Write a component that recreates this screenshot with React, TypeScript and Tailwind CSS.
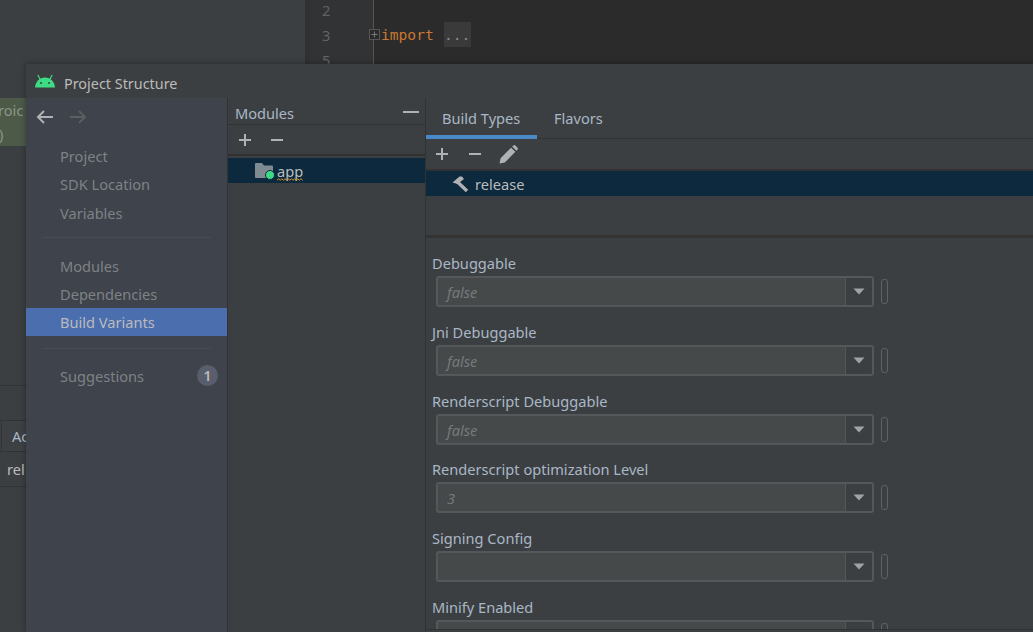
import React from "react";

const font = { fontFamily: '"Noto Sans", "Open Sans", sans-serif' };

function Plus({ className = "" }: { className?: string }) {
  return (
    <svg width="14" height="14" viewBox="0 0 14 14" className={className}>
      <path d="M7 1v12M1 7h12" stroke="#afb1b3" strokeWidth="2" />
    </svg>
  );
}
function Minus({ className = "" }: { className?: string }) {
  return (
    <svg width="14" height="14" viewBox="0 0 14 14" className={className}>
      <path d="M1 7h12" stroke="#afb1b3" strokeWidth="2" />
    </svg>
  );
}

function Field({ label, value }: { label: string; value?: string }) {
  return (
    <div className="flex flex-col shrink-0">
      <div className="h-[22px] pl-[6px] text-[14.6px] leading-[22px] text-[#a9b7c6] whitespace-nowrap">{label}</div>
      <div className="flex items-center mt-[2px] ml-[10px] mb-[13.75px]">
        <div className="flex w-[438px] h-[31px] rounded-[3px] border-2 border-[#55585a] bg-[#45494a]">
          <div className="flex-1 pl-[9px] pt-[1px] text-[14.6px] leading-[27px] italic text-[#77797b]">{value}</div>
          <div className="w-[27px] flex items-center justify-center bg-[#3c3f41] border-l border-[#55585a] rounded-r-[2px]">
            <svg width="12" height="7" viewBox="0 0 12 7">
              <path d="M0.5 0.5h11L6 6.5z" fill="#a0a2a4" />
            </svg>
          </div>
        </div>
        <div className="ml-[7px] w-[7px] h-[25px] rounded-[3px] border border-[#5f6264]" />
      </div>
    </div>
  );
}

function NavItem({ children, active }: { children: React.ReactNode; active?: boolean }) {
  return (
    <div
      className={
        "h-[28px] pl-[34px] pt-[1px] text-[14.6px] leading-[27px] " +
        (active ? "bg-[#4b6eaf] text-[#bbbbbb]" : "text-[#7f8285]")
      }
    >
      {children}
    </div>
  );
}

export default function App() {
  return (
    <div className="relative w-[1033px] h-[632px] overflow-hidden bg-[#3c3f41] flex" style={font}>
      {/* Background IDE */}
      <div className="w-[305px] h-full flex flex-col">
        <div className="mt-[98px] w-[26px] h-[48px] bg-[#4d5a48] text-[14.6px] text-[#8b958a] leading-[24px] whitespace-nowrap overflow-hidden">
          <div className="-ml-[2px]">roic</div>
          <div className="-ml-[1px]">)</div>
        </div>
        <div className="mt-[239px] h-[1px] w-full bg-[#323232]" />
        <div className="mt-[34px] h-[32px] w-full border-t border-b border-[#323232] bg-[#3e4144] flex">
          <div className="ml-[1px] pl-[10px] w-[26px] text-[14.6px] leading-[31px] text-[#a9b7c6] border-l border-[#323232] overflow-hidden">Ac</div>
        </div>
        <div className="h-[35px] w-full border-b border-[#323232] pl-[7px] text-[14.6px] leading-[35px] text-[#bbbbbb] overflow-hidden">rel</div>
      </div>
      <div className="w-[69px] h-full bg-[#313335] border-r border-[#555555] border-l-[5px] border-l-[#2f3133] text-[14.6px] text-[#606366] pl-[12px]">
        <div className="h-[25px] leading-[20px]">2</div>
        <div className="h-[25px] leading-[20px]">3</div>
        <div className="h-[25px] leading-[20px]">5</div>
      </div>
      <div className="flex-1 h-full bg-[#2b2b2b] relative">
        <div className="flex items-center h-[25px] mt-[22px] text-[14.6px]" style={{ fontFamily: '"DejaVu Sans Mono", monospace' }}>
          <span className="ml-[7px] text-[#cc7832]">import</span>
          <span className="ml-[10px] w-[27px] h-[25px] leading-[25px] bg-[#3a3a3a] text-[#8a8a8a] text-center">...</span>
        </div>
        <div className="absolute left-[-5px] top-[29px] w-[11px] h-[11px] border border-[#555555] bg-[#2b2b2b] flex items-center justify-center">
          <svg width="7" height="7" viewBox="0 0 7 7"><path d="M3.5 0.5v6M0.5 3.5h6" stroke="#777" strokeWidth="1" /></svg>
        </div>
      </div>

      {/* Dialog window */}
      <div className="absolute left-[26px] top-[64px] w-[1007px] h-[568px] bg-[#3c3f41] flex flex-col shadow-[0_0_6px_rgba(0,0,0,0.35)]">
        <div className="h-[34px] flex items-center shrink-0">
          <svg width="20" height="15" viewBox="0 0 20 15" className="ml-[9px] -mt-[2px]">
            <path d="M0 14.5C0.5 8.5 4.5 4.5 10 4.5s9.5 4 10 10z" fill="#3ddc84" />
            <path d="M5 6L2.8 2M15 6l2.2-4" stroke="#3ddc84" strokeWidth="1.2" />
            <circle cx="6" cy="10" r="1" fill="#3c3f41" />
            <circle cx="14" cy="10" r="1" fill="#3c3f41" />
          </svg>
          <span className="ml-[9px] mt-[5px] text-[14.4px] leading-[22px] text-[#bbbbbb]">Project Structure</span>
        </div>
        <div className="flex-1 flex min-h-0">
          {/* Nav */}
          <div className="w-[202px] shrink-0 bg-[#3e434c] border-r border-[#323232] flex flex-col">
            <div className="flex items-center h-[38px] pl-[10px] gap-[15px]">
              <svg width="18" height="14" viewBox="0 0 18 14"><path d="M17 7H2M8 1L2 7l6 6" fill="none" stroke="#afb1b3" strokeWidth="2" /></svg>
              <svg width="18" height="14" viewBox="0 0 18 14"><path d="M1 7h15M10 1l6 6-6 6" fill="none" stroke="#5c5e60" strokeWidth="2" /></svg>
            </div>
            <div className="mt-[6px]">
              <NavItem>Project</NavItem>
              <NavItem>SDK Location</NavItem>
              <div className="pt-[1px]"><NavItem>Variables</NavItem></div>
            </div>
            <div className="mx-[16px] mt-[10px] mb-[14px] h-[1px] bg-[#4a4d50]" />
            <NavItem>Modules</NavItem>
            <NavItem>Dependencies</NavItem>
            <NavItem active>Build Variants</NavItem>
            <div className="mx-[16px] mt-[12px] mb-[14px] h-[1px] bg-[#4a4d50]" />
            <div className="flex items-center justify-between pr-[9px] -mt-[2px]">
              <div className="pl-[34px] mt-[1px] text-[14.6px] leading-[28px] text-[#7f8285]">Suggestions</div>
              <div className="w-[21px] h-[21px] rounded-full bg-[#5a5d6b] text-[#bbbbbb] text-[14px] leading-[21px] text-center font-semibold">1</div>
            </div>
          </div>
          {/* Modules */}
          <div className="w-[198px] shrink-0 border-r border-[#323232] flex flex-col">
            <div className="h-[27px] flex items-center justify-between pl-[7px] pr-[6px] border-b border-[#323232]">
              <span className="mt-[4px] text-[14.6px] leading-[22px] text-[#a9b7c6]">Modules</span>
              <svg width="16" height="4" viewBox="0 0 16 4" className="mt-[1px]"><path d="M0 2h16" stroke="#afb1b3" strokeWidth="2" /></svg>
            </div>
            <div className="h-[31px] flex items-center pl-[10px] gap-[18px] border-b-2 border-[#323232]">
              <Plus />
              <Minus />
            </div>
            <div className="mt-[2px] h-[25px] bg-[#0d293e] flex items-center pl-[27px]">
              <div className="relative w-[18px] h-[15px]">
                <svg width="18" height="15" viewBox="0 0 18 15"><path d="M1 0h6l2 2.5h8a1 1 0 0 1 1 1V14a1 1 0 0 1-1 1H1a1 1 0 0 1-1-1V1a1 1 0 0 1 1-1z" fill="#7f8b91" /></svg>
                <div className="absolute left-[9.5px] top-[6.5px] w-[10px] h-[10px] rounded-full bg-[#3ddc84] border-[1.5px] border-[#0d293e]" />
              </div>
              <span className="relative ml-[4px] mt-[1px] text-[14.6px] leading-[22px] text-[#bbbbbb]">
                app
                <svg width="26" height="3" viewBox="0 0 26 3" className="absolute left-0 top-[18px]">
                  <path d="M0 2.2l1.6-1.4 1.6 1.4 1.6-1.4 1.6 1.4 1.6-1.4 1.6 1.4 1.6-1.4 1.6 1.4 1.6-1.4 1.6 1.4 1.6-1.4 1.6 1.4 1.6-1.4 1.6 1.4 1.6-1.4 1.6 1.4" fill="none" stroke="#d9942b" strokeWidth="1" />
                </svg>
              </span>
            </div>
          </div>
          {/* Right */}
          <div className="flex-1 min-w-0 flex flex-col overflow-hidden">
            <div className="h-[41px] shrink-0 flex items-stretch border-b border-[#323232] text-[14.6px] text-[#a9b7c6]">
              <div className="w-[111px] pl-[16px] leading-[41px] border-b-[4px] border-[#4a88c7] h-[41px]">Build Types</div>
              <div className="ml-[17px] leading-[41px]">Flavors</div>
            </div>
            <div className="h-[32px] shrink-0 flex items-center pl-[9px] gap-[19px] border-b-2 border-[#323232]">
              <Plus />
              <Minus />
              <svg width="19" height="19" viewBox="0 0 18 18" className="-ml-[2px]">
                <path d="M0.5 17.5l1-5L11.5 2.5l4 4-10 10zM12.5 1.5l1-1a1.5 1.5 0 0 1 2 0l2 2a1.5 1.5 0 0 1 0 2l-1 1z" fill="#afb1b3" />
              </svg>
            </div>
            <div className="h-[25px] shrink-0 bg-[#0d293e] flex items-center pl-[26px]">
              <svg width="17" height="16" viewBox="0 0 17 16">
                <path d="M5 5.5L15 15" stroke="#afb1b3" strokeWidth="3.4" />
                <path d="M0.5 6.5L7.5 0.5h2.5l2 2.5-6.5 5z" fill="#afb1b3" />
              </svg>
              <span className="ml-[6px] mt-[1px] text-[14.6px] leading-[22px] text-[#bbbbbb]">release</span>
            </div>
            <div className="h-[42px] shrink-0 border-b-[3px] border-[#333333]" />
            <div className="pt-[14px] flex flex-col flex-1 min-h-0 overflow-hidden border-b border-[#323232] mb-[2px]">
              <Field label="Debuggable" value="false" />
              <Field label="Jni Debuggable" value="false" />
              <Field label="Renderscript Debuggable" value="false" />
              <Field label="Renderscript optimization Level" value="3" />
              <Field label="Signing Config" />
              <Field label="Minify Enabled" />
            </div>
          </div>
        </div>
      </div>
    </div>
  );
}
